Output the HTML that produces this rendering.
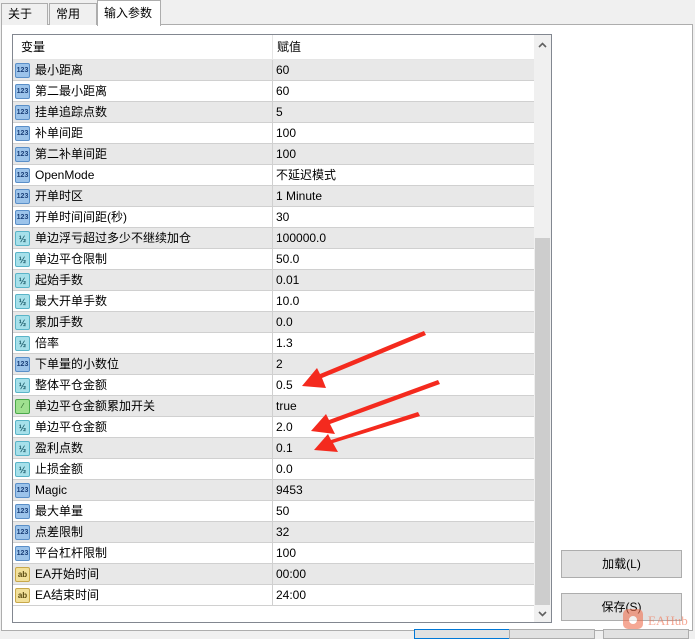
<!DOCTYPE html>
<html><head><meta charset="utf-8">
<style>
*{margin:0;padding:0;box-sizing:border-box}
body{width:695px;height:634px;background:#f0f0f0;font-family:"Liberation Sans","Noto Sans CJK SC",sans-serif;font-size:12px;color:#000;position:relative;overflow:hidden}
.tab{position:absolute;top:3px;height:22px;border:1px solid #adadad;border-bottom:none;background:#f0f0f0;line-height:20px;padding-left:6px;font-size:12px}
.panel{position:absolute;left:1px;top:24px;width:692px;height:607px;background:#fff;border:1px solid #adadad}
.list{position:absolute;left:12px;top:34px;width:540px;height:589px;border:1px solid #828790;background:#fff;overflow:hidden}
.hdr{position:absolute;left:0;top:0;width:521px;height:25px;background:#fff;border-bottom:1px solid #e5e5e5}
.hdr span{position:absolute;top:0;line-height:25px}
.hdr i{position:absolute;left:259px;top:0;width:1px;height:25px;background:#e5e5e5}
.row{position:absolute;left:0;width:521px;height:21px;border-bottom:1px solid #d0d0d0}
.row.g{background:#e8e8e8}
.row span{line-height:20px;height:20px;display:block;overflow:hidden}
.row .n{position:absolute;left:22px;top:0;white-space:nowrap}
.row .v{position:absolute;left:263px;top:0}
.row .d{position:absolute;left:259px;top:0;width:1px;height:20px;background:#d0d0d0}
.ic{position:absolute;left:2px;top:3px;width:15px;height:15px;border-radius:2px;font-size:7px;font-weight:bold;line-height:14px;text-align:center;font-family:"Liberation Sans",sans-serif}
.i1{background:#9cc3ea;border:1px solid #5a8fc8;color:#1a3f78}
.i2{background:#a6e0ea;border:1px solid #5ab4c8;color:#1a5a68;font-size:9px}
.i3{background:#9fe08f;border:1px solid #4aa84a;color:#2a6a2a}
.i4{background:#f2e09a;border:1px solid #c8a84a;color:#5a4a10;font-size:8px}
.sb{position:absolute;left:521px;top:0;width:17px;height:587px;background:#f0f0f0}
.th{position:absolute;left:1px;top:203px;width:15px;height:367px;background:#cdcdcd}
.btn{position:absolute;width:121px;height:28px;border:1px solid #adadad;background:#e1e1e1;text-align:center;line-height:26px;font-size:12px}
</style></head><body>
<div class="panel"></div>
<div class="tab" style="left:1px;width:47px">关于</div>
<div class="tab" style="left:49px;width:48px">常用</div>
<div class="tab" style="left:97px;top:0;height:26px;width:64px;background:#fff;line-height:24px">输入参数</div>
<div class="list">
<div class="hdr"><span style="left:8px">变量</span><i></i><span style="left:264px">赋值</span></div>
<div class="row g" style="top:25px"><div class="ic i1">123</div><span class="n">最小距离</span><i class="d"></i><span class="v">60</span></div>
<div class="row" style="top:46px"><div class="ic i1">123</div><span class="n">第二最小距离</span><i class="d"></i><span class="v">60</span></div>
<div class="row g" style="top:67px"><div class="ic i1">123</div><span class="n">挂单追踪点数</span><i class="d"></i><span class="v">5</span></div>
<div class="row" style="top:88px"><div class="ic i1">123</div><span class="n">补单间距</span><i class="d"></i><span class="v">100</span></div>
<div class="row g" style="top:109px"><div class="ic i1">123</div><span class="n">第二补单间距</span><i class="d"></i><span class="v">100</span></div>
<div class="row" style="top:130px"><div class="ic i1">123</div><span class="n">OpenMode</span><i class="d"></i><span class="v">不延迟模式</span></div>
<div class="row g" style="top:151px"><div class="ic i1">123</div><span class="n">开单时区</span><i class="d"></i><span class="v">1 Minute</span></div>
<div class="row" style="top:172px"><div class="ic i1">123</div><span class="n">开单时间间距(秒)</span><i class="d"></i><span class="v">30</span></div>
<div class="row g" style="top:193px"><div class="ic i2">½</div><span class="n">单边浮亏超过多少不继续加仓</span><i class="d"></i><span class="v">100000.0</span></div>
<div class="row" style="top:214px"><div class="ic i2">½</div><span class="n">单边平仓限制</span><i class="d"></i><span class="v">50.0</span></div>
<div class="row g" style="top:235px"><div class="ic i2">½</div><span class="n">起始手数</span><i class="d"></i><span class="v">0.01</span></div>
<div class="row" style="top:256px"><div class="ic i2">½</div><span class="n">最大开单手数</span><i class="d"></i><span class="v">10.0</span></div>
<div class="row g" style="top:277px"><div class="ic i2">½</div><span class="n">累加手数</span><i class="d"></i><span class="v">0.0</span></div>
<div class="row" style="top:298px"><div class="ic i2">½</div><span class="n">倍率</span><i class="d"></i><span class="v">1.3</span></div>
<div class="row g" style="top:319px"><div class="ic i1">123</div><span class="n">下单量的小数位</span><i class="d"></i><span class="v">2</span></div>
<div class="row" style="top:340px"><div class="ic i2">½</div><span class="n">整体平仓金额</span><i class="d"></i><span class="v">0.5</span></div>
<div class="row g" style="top:361px"><div class="ic i3">⁄</div><span class="n">单边平仓金额累加开关</span><i class="d"></i><span class="v">true</span></div>
<div class="row" style="top:382px"><div class="ic i2">½</div><span class="n">单边平仓金额</span><i class="d"></i><span class="v">2.0</span></div>
<div class="row g" style="top:403px"><div class="ic i2">½</div><span class="n">盈利点数</span><i class="d"></i><span class="v">0.1</span></div>
<div class="row" style="top:424px"><div class="ic i2">½</div><span class="n">止损金额</span><i class="d"></i><span class="v">0.0</span></div>
<div class="row g" style="top:445px"><div class="ic i1">123</div><span class="n">Magic</span><i class="d"></i><span class="v">9453</span></div>
<div class="row" style="top:466px"><div class="ic i1">123</div><span class="n">最大单量</span><i class="d"></i><span class="v">50</span></div>
<div class="row g" style="top:487px"><div class="ic i1">123</div><span class="n">点差限制</span><i class="d"></i><span class="v">32</span></div>
<div class="row" style="top:508px"><div class="ic i1">123</div><span class="n">平台杠杆限制</span><i class="d"></i><span class="v">100</span></div>
<div class="row g" style="top:529px"><div class="ic i4">ab</div><span class="n">EA开始时间</span><i class="d"></i><span class="v">00:00</span></div>
<div class="row" style="top:550px"><div class="ic i4">ab</div><span class="n">EA结束时间</span><i class="d"></i><span class="v">24:00</span></div>
<div class="sb"><div class="th"></div>
<svg style="position:absolute;left:4px;top:7px" width="9" height="6"><path d="M1 5 L4.5 1.5 L8 5" stroke="#606060" stroke-width="1.6" fill="none"/></svg>
<svg style="position:absolute;left:4px;top:576px" width="9" height="6"><path d="M1 1 L4.5 4.5 L8 1" stroke="#606060" stroke-width="1.6" fill="none"/></svg>
</div>
</div>
<div class="btn" style="left:561px;top:550px">加载(L)</div>
<div class="btn" style="left:561px;top:593px">保存(S)</div>
<div class="btn" style="left:414px;top:629px;border-color:#0078d7;height:10px"></div>
<div class="btn" style="left:509px;top:629px;width:86px;height:10px"></div>
<div class="btn" style="left:603px;top:629px;width:86px;height:10px"></div>
<svg style="position:absolute;left:0;top:0" width="695" height="634">
<g fill="#f42a1e">
<polygon points="424,331 426,335 322,378 326,388 302,386 317,368 320,374"/>
<polygon points="438,380 440,384 330,424 335,434 311,431 326,414 329,420"/>
<polygon points="418,412 420,416 333,443 338,452 314,450 328,434 331,440"/>
</g>
<g opacity="0.6">
<rect x="623" y="609" width="20" height="20" rx="5" fill="#f07050"/>
<circle cx="633" cy="620" r="4" fill="#fff"/>
<text x="648" y="625" font-family="Liberation Serif,serif" font-size="13" fill="#f07050">EAHub</text>
</g>
</svg>
</body></html>
